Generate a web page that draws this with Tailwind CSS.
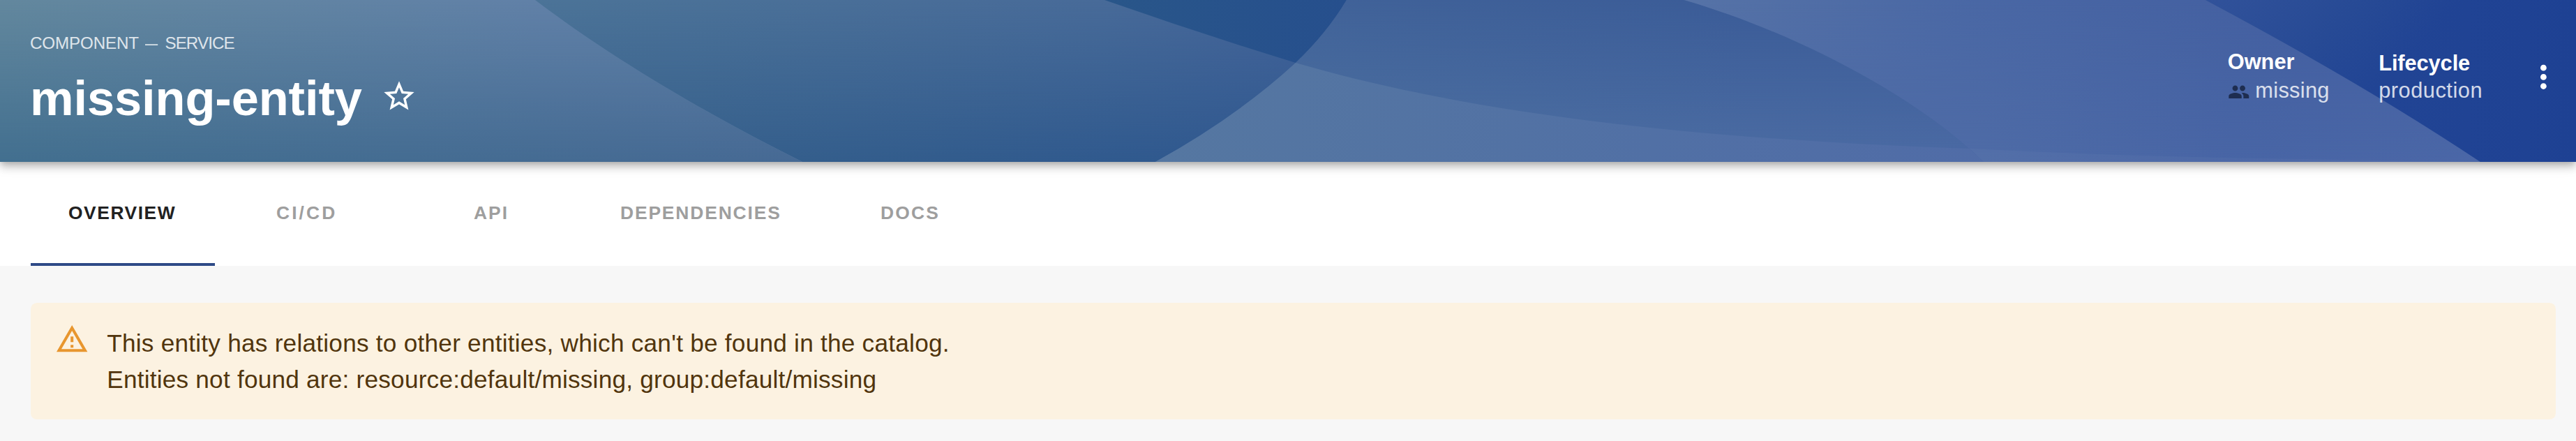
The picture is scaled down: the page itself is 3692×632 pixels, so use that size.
<!DOCTYPE html>
<html lang="en">
<head>
<meta charset="utf-8">
<title>missing-entity</title>
<script src="https://cdn.jsdelivr.net/npm/@tailwindcss/browser@4"></script>
</head>
<body class="h-[632px] w-[3692px] overflow-hidden bg-[#f7f7f7] font-['Liberation_Sans',Arial,sans-serif]">
<header class="relative z-10 flex h-[232px] justify-between pr-[20px] pl-[43px] text-white shadow-[0_4.4px_8.8px_-2.2px_rgba(0,0,0,0.2),0_8.8px_11px_0_rgba(0,0,0,0.14),0_2.2px_22px_0_rgba(0,0,0,0.12)]">
  <svg class="absolute inset-0 -z-10 h-[232px] w-[3692px]" viewBox="0 0 3692 232" preserveAspectRatio="none" aria-hidden="true">
    <defs>
      <linearGradient id="fade" x1="0" y1="0" x2="0" y2="1"><stop offset="0" stop-color="#fff" stop-opacity="0"/><stop offset="1" stop-color="#fff"/></linearGradient>
      <mask id="down" maskUnits="userSpaceOnUse" x="0" y="0" width="3692" height="232"><rect width="3692" height="232" fill="url(#fade)"/></mask>
      <linearGradient id="leftTop" gradientUnits="userSpaceOnUse" x1="0" y1="0" x2="780" y2="0"><stop offset="0" stop-color="#63889e"/><stop offset="1" stop-color="#6181a8"/></linearGradient>
      <linearGradient id="leftBottom" gradientUnits="userSpaceOnUse" x1="0" y1="0" x2="1150" y2="0"><stop offset="0" stop-color="#426f8f"/><stop offset="1" stop-color="#466994"/></linearGradient>
      <linearGradient id="midTop" gradientUnits="userSpaceOnUse" x1="767" y1="0" x2="1857" y2="0"><stop offset="0" stop-color="#4c7498"/><stop offset=".74" stop-color="#486b99"/><stop offset="1" stop-color="#446499"/></linearGradient>
      <linearGradient id="midBottom" gradientUnits="userSpaceOnUse" x1="1000" y1="0" x2="1857" y2="0"><stop offset="0" stop-color="#355f8b"/><stop offset="1" stop-color="#2e578f"/></linearGradient>
      <linearGradient id="wedge" gradientUnits="userSpaceOnUse" x1="1583" y1="0" x2="1930" y2="0"><stop offset="0" stop-color="#295689"/><stop offset="1" stop-color="#264f8d"/></linearGradient>
      <linearGradient id="bowlTop" gradientUnits="userSpaceOnUse" x1="1857" y1="0" x2="2500" y2="0"><stop offset="0" stop-color="#416399"/><stop offset="1" stop-color="#3b5c98"/></linearGradient>
      <linearGradient id="bowlBottom" gradientUnits="userSpaceOnUse" x1="1857" y1="0" x2="2843" y2="0"><stop offset="0" stop-color="#4c70a0"/><stop offset="1" stop-color="#4b6aa4"/></linearGradient>
      <linearGradient id="floor" gradientUnits="userSpaceOnUse" x1="1656" y1="0" x2="2843" y2="0"><stop offset="0" stop-color="#5577a1"/><stop offset=".6" stop-color="#5170a5"/><stop offset="1" stop-color="#506ca7"/></linearGradient>
      <linearGradient id="sweepTop" gradientUnits="userSpaceOnUse" x1="2413" y1="0" x2="3300" y2="0"><stop offset="0" stop-color="#5673a7"/><stop offset=".45" stop-color="#4a68a5"/><stop offset="1" stop-color="#435fa1"/></linearGradient>
      <linearGradient id="sweepBottom" gradientUnits="userSpaceOnUse" x1="2843" y1="0" x2="3555" y2="0"><stop offset="0" stop-color="#4e6ba6"/><stop offset=".5" stop-color="#4865a5"/><stop offset="1" stop-color="#4b67a7"/></linearGradient>
      <linearGradient id="edge" gradientUnits="userSpaceOnUse" x1="3161" y1="0" x2="3346" y2="185"><stop offset="0" stop-color="#31529a"/><stop offset=".6" stop-color="#274a95"/><stop offset="1" stop-color="#214494"/></linearGradient>
      <linearGradient id="edgeRight" gradientUnits="userSpaceOnUse" x1="3420" y1="0" x2="3692" y2="0"><stop offset="0" stop-color="#1f4294" stop-opacity="0"/><stop offset="1" stop-color="#1e4193"/></linearGradient>
    </defs>
    <rect width="3692" height="232" fill="url(#midTop)"/>
    <rect width="3692" height="232" fill="url(#midBottom)" mask="url(#down)"/>
    <path d="M0 0H767C875 82 1010 162 1150 232H0Z" fill="url(#leftTop)"/>
    <g mask="url(#down)"><path d="M0 0H767C875 82 1010 162 1150 232H0Z" fill="url(#leftBottom)"/></g>
    <path d="M1583 0H1930Q1902 47 1857 90Q1720 48 1583 0Z" fill="url(#wedge)"/>
    <path d="M1930 0H3692V232H1656Q1772 168 1857 90Q1902 47 1930 0Z" fill="url(#bowlTop)"/>
    <g mask="url(#down)"><path d="M1930 0H3692V232H1656Q1772 168 1857 90Q1902 47 1930 0Z" fill="url(#bowlBottom)"/></g>
    <path d="M1656 232Q1772 168 1857 90C2080 155 2380 198 2823 213L2843 232Z" fill="url(#floor)"/>
    <path d="M2413.5 0C2585 50 2755 145 2843 232H3555Q3390 122 3161 0Z" fill="url(#sweepTop)"/>
    <g mask="url(#down)"><path d="M2413.5 0C2585 50 2755 145 2843 232H3555Q3390 122 3161 0Z" fill="url(#sweepBottom)"/></g>
    <path d="M2823 213Q3060 225 3300 228L3555 232H2843Z" fill="#fff" fill-opacity=".03"/>
    <path d="M3161 0H3692V232H3555Q3390 122 3161 0Z" fill="url(#edge)"/>
    <path d="M3161 0H3692V232H3555Q3390 122 3161 0Z" fill="url(#edgeRight)"/>
  </svg>

  <div class="pt-[47.6px]">
    <p class="flex text-[24.2px] leading-[28px] text-white/80">
      <span class="w-[162px] tracking-[-0.15px]">COMPONENT</span>
      <span class="w-[31.5px] origin-left scale-x-75 pl-[4px]">—</span>
      <span class="tracking-[-0.95px]">SERVICE</span>
    </p>
    <div class="mt-[23px] flex">
      <h1 class="w-[502.5px] text-[70.4px] leading-[84px] font-bold tracking-[-0.1px] whitespace-nowrap">missing-entity</h1>
      <svg class="mt-[13px] size-[52px]" viewBox="0 0 24 24" fill="currentColor"><path d="M22 9.24l-7.19-.62L12 2 9.19 8.63 2 9.24l5.46 4.73L5.82 21 12 17.27 18.18 21l-1.63-7.03L22 9.24zM12 15.4l-3.76 2.27 1-4.28-3.32-2.88 4.38-.38L12 6.1l1.71 4.04 4.38.38-3.32 2.88 1 4.28L12 15.4z"/></svg>
    </div>
  </div>

  <div class="flex text-[30.8px] leading-[36px] whitespace-nowrap">
    <dl class="w-[216.5px] pt-[71.3px]">
      <dt class="font-bold">Owner</dt>
      <dd class="mt-[5px] flex text-white/80"><svg class="mt-[4px] mr-[8px] size-[31.6px] text-[#1e2d50]" viewBox="0 0 24 24" fill="currentColor"><path d="M16 11c1.66 0 2.99-1.34 2.99-3S17.66 5 16 5c-1.66 0-3 1.34-3 3s1.34 3 3 3zm-8 0c1.66 0 2.99-1.34 2.99-3S9.66 5 8 5C6.34 5 5 6.34 5 8s1.34 3 3 3zm0 2c-2.33 0-7 1.17-7 3.5V19h14v-2.5c0-2.33-4.67-3.5-7-3.5zm8 0c-.29 0-.62.02-.97.05 1.16.84 1.97 1.97 1.97 3.45V19h6v-2.5c0-2.33-4.67-3.5-7-3.5z"/></svg><span class="tracking-[0.3px]">missing</span></dd>
    </dl>
    <dl class="w-[210px] pt-[73.3px]">
      <dt class="font-bold tracking-[-0.1px]">Lifecycle</dt>
      <dd class="mt-[3px] tracking-[0.5px] text-white/80">production</dd>
    </dl>
    <svg class="mt-[84px] size-[52.8px]" viewBox="0 0 24 24" fill="currentColor"><path d="M12 8c1.100 0 2-.9 2-2s-.9-2-2-2-2 .9-2 2 .9 2 2 2zm0 2c-1.100 0-2 .9-2 2s.9 2 2 2 2-.9 2-2-.9-2-2-2zm0 6c-1.100 0-2 .9-2 2s.9 2 2 2 2-.9 2-2-.9-2-2-2z"/></svg>
  </div>
</header>

<nav class="flex h-[149px] bg-white pl-[44px] text-[26.4px] leading-[32px] font-bold text-[#9e9e9e]">
  <a class="w-[264px] border-b-4 border-[#2e4a87] pt-[57.4px] pl-[54px] tracking-[1.55px] text-[#212121]">OVERVIEW</a>
  <a class="w-[264px] pt-[57.4px] pl-[88px] tracking-[3.1px]">CI/CD</a>
  <a class="w-[264px] pt-[57.4px] pl-[107px] tracking-[2px]">API</a>
  <a class="w-[336px] pt-[57.4px] pl-[53px] tracking-[1.87px]">DEPENDENCIES</a>
  <a class="w-[264px] pt-[57.4px] pl-[90px] tracking-[2.2px]">DOCS</a>
</nav>

<main class="pt-[53px] pr-[29px] pl-[44px]">
  <div class="flex h-[167px] rounded-[8.8px] bg-[#fcf2e1] pl-[34.8px]">
    <svg class="mt-[28px] mr-[26px] size-[48.4px] text-[#e8962e]" viewBox="0 0 24 24" fill="currentColor"><path d="M12 5.990L19.530 19H4.470L12 5.990M12 2L1 21h22L12 2zm1 14h-2v2h2v-2zm0-6h-2v4h2v-4z"/></svg>
    <div class="pt-[31.8px] text-[35.2px] leading-[52px] whitespace-nowrap text-[#51350d]">
      <p class="tracking-[0.24px]">This entity has relations to other entities, which can't be found in the catalog.</p>
      <p class="tracking-[0.22px]">Entities not found are: resource:default/missing, group:default/missing</p>
    </div>
  </div>
</main>
</body>
</html>
